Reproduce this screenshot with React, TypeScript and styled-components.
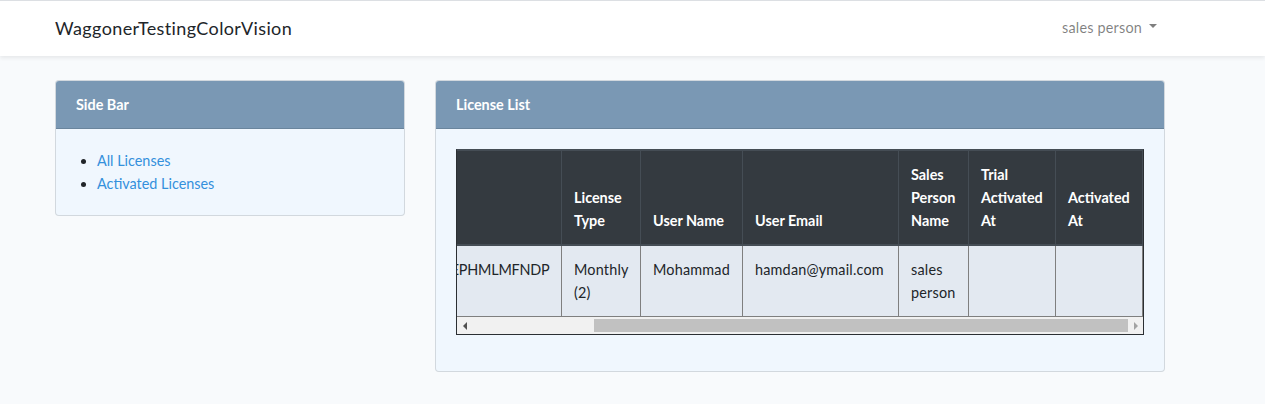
import { useLayoutEffect, useRef, useState } from 'react';
import styled, { createGlobalStyle } from 'styled-components';

const FONT = `Lato, 'Noto Sans', sans-serif`;

const GlobalStyle = createGlobalStyle`
  html, body {
    margin: 0;
    padding: 0;
    background: #f8fafc;
    font-family: ${FONT};
    font-size: 14.4px;
    line-height: 1.6;
    color: #212529;
  }
  * { box-sizing: border-box; }
`;

const columns = [
  { key: 'idx', label: '#', width: 50 },
  { key: 'license', label: 'License Key', width: 211 },
  { key: 'type', label: 'License Type', width: 79 },
  { key: 'user', label: 'User Name', width: 102 },
  { key: 'email', label: 'User Email', width: 156 },
  { key: 'sales', label: 'Sales Person Name', width: 70 },
  { key: 'trial', label: 'Trial Activated At', width: 87 },
  { key: 'activated', label: 'Activated At', width: 87 },
];

const rows = [
  {
    idx: '1',
    license: 'XWQZRBTKXEPHMLMFNDP',
    type: 'Monthly (2)',
    user: 'Mohammad',
    email: 'hamdan@ymail.com',
    sales: 'sales person',
    trial: '',
    activated: '',
  },
];

const App = () => {
  const scrollRef = useRef<HTMLDivElement>(null);
  const [thumb, setThumb] = useState({ left: 0, width: 100 });

  useLayoutEffect(() => {
    const el = scrollRef.current;
    if (!el) return;
    el.scrollLeft = el.scrollWidth;
    const total = el.scrollWidth || 1;
    setThumb({
      left: (el.scrollLeft / total) * 100,
      width: (el.clientWidth / total) * 100,
    });
  }, []);

  return (
    <>
      <GlobalStyle />
      <Navbar>
        <Container>
          <Brand>WaggonerTestingColorVision</Brand>
          <UserMenu>
            sales person
            <Caret />
          </UserMenu>
        </Container>
      </Navbar>

      <Main>
        <Container>
          <Row>
            <Card $width={350}>
              <CardHeader>Side Bar</CardHeader>
              <CardBody>
                <LinkList>
                  <li>
                    <NavLink href="#">All Licenses</NavLink>
                  </li>
                  <li>
                    <NavLink href="#">Activated Licenses</NavLink>
                  </li>
                </LinkList>
              </CardBody>
            </Card>

            <Card $width={730}>
              <CardHeader>License List</CardHeader>
              <CardBody>
                <TableFrame>
                  <ScrollArea ref={scrollRef}>
                    <Table>
                      <colgroup>
                        {columns.map((c) => (
                          <col key={c.key} style={{ width: c.width }} />
                        ))}
                      </colgroup>
                      <thead>
                        <tr>
                          {columns.map((c) => (
                            <Th key={c.key}>{c.label}</Th>
                          ))}
                        </tr>
                      </thead>
                      <tbody>
                        {rows.map((r) => (
                          <tr key={r.idx}>
                            {columns.map((c) => (
                              <Td key={c.key} $nowrap={c.key === 'license'}>
                                {(r as any)[c.key]}
                              </Td>
                            ))}
                          </tr>
                        ))}
                      </tbody>
                    </Table>
                  </ScrollArea>
                  <ScrollBar>
                    <ArrowButton>
                      <ArrowLeft />
                    </ArrowButton>
                    <Track>
                      <Thumb style={{ left: `${thumb.left}%`, width: `${thumb.width}%` }} />
                    </Track>
                    <ArrowButton>
                      <ArrowRight />
                    </ArrowButton>
                  </ScrollBar>
                </TableFrame>
              </CardBody>
            </Card>
          </Row>
        </Container>
      </Main>
    </>
  );
};

export default App;

const Navbar = styled.nav`
  background: #fff;
  border-top: 1px solid #dcdfe3;
  height: 56px;
  box-shadow: 0 2px 4px rgba(0, 0, 0, 0.075);
  display: flex;
  align-items: center;
`;

const Container = styled.div`
  width: 1110px;
  margin-left: 55px;
  display: flex;
  align-items: center;
  justify-content: space-between;
`;

const Brand = styled.a`
  font-size: 18px;
  letter-spacing: 0.38px;
  color: #212529;
  line-height: 1;
  padding-bottom: 1px;
`;

const UserMenu = styled.div`
  display: flex;
  align-items: center;
  color: rgba(0, 0, 0, 0.5);
  font-size: 14.4px;
  letter-spacing: 0.2px;
  padding: 0 8px;
  margin-top: -2px;
`;

const Caret = styled.span`
  display: inline-block;
  margin-left: 7px;
  margin-top: -2px;
  border-top: 4.3px solid rgba(0, 0, 0, 0.5);
  border-left: 4.3px solid transparent;
  border-right: 4.3px solid transparent;
`;

const Main = styled.main`
  padding: 24px 0;
`;

const Row = styled.div`
  display: flex;
  align-items: flex-start;
  gap: 30px;
  width: 100%;
`;

const Card = styled.section<{ $width: number }>`
  width: ${(p) => p.$width}px;
  border: 1px solid rgba(0, 0, 0, 0.125);
  border-radius: 4px;
  background: #f0f7fe;
  overflow: hidden;
`;

const CardHeader = styled.div`
  background: #7a98b4;
  color: #fff;
  font-weight: 700;
  padding: 12px 20px;
  line-height: 23px;
  border-bottom: 1px solid rgba(0, 0, 0, 0.125);
`;

const CardBody = styled.div`
  padding: 20px;
`;

const LinkList = styled.ul`
  margin: 0;
  padding-left: 21px;
  line-height: 23px;
`;

const NavLink = styled.a`
  color: #3490dc;
  text-decoration: none;
`;

const TableFrame = styled.div`
  border: 1px solid #2b2f33;
  border-top-color: #454d55;
  margin-bottom: 16px;
`;

const ScrollArea = styled.div`
  overflow: hidden;
  width: 100%;
`;

const Table = styled.table`
  table-layout: fixed;
  width: 842px;
  border-collapse: collapse;
  color: #212529;
`;

const Th = styled.th`
  background: #343a40;
  color: #fff;
  font-weight: 700;
  text-align: left;
  vertical-align: bottom;
  padding: 12px;
  line-height: 23px;
  border: 1px solid #454d55;
  border-bottom-width: 2px;
  height: 94px;
`;

const Td = styled.td<{ $nowrap?: boolean }>`
  background: #e3e9f1;
  vertical-align: top;
  padding: 12px;
  line-height: 23px;
  border: 1px solid #7f7f7f;
  border-top: none;
  white-space: ${(p) => (p.$nowrap ? 'nowrap' : 'normal')};
  letter-spacing: ${(p) => (p.$nowrap ? '-0.2px' : '0.2px')};
  overflow: hidden;
`;

const ScrollBar = styled.div`
  display: flex;
  height: 17px;
  background: #f1f1f1;
`;

const ArrowButton = styled.div`
  width: 15px;
  display: flex;
  align-items: center;
  justify-content: center;
`;

const ArrowLeft = styled.span`
  border-right: 4px solid #505050;
  border-top: 4px solid transparent;
  border-bottom: 4px solid transparent;
`;

const ArrowRight = styled.span`
  border-left: 4px solid #a3a3a3;
  border-top: 4px solid transparent;
  border-bottom: 4px solid transparent;
`;

const Track = styled.div`
  flex: 1;
  position: relative;
`;

const Thumb = styled.div`
  position: absolute;
  top: 2px;
  bottom: 2px;
  background: #c1c1c1;
`;
